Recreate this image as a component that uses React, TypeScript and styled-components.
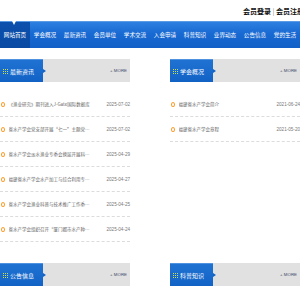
import React from 'react'
import styled, { createGlobalStyle } from 'styled-components'

const GlobalStyle = createGlobalStyle`
  html, body {
    margin: 0;
    padding: 0;
    background: #ffffff;
    overflow: hidden;
  }
  body {
    font-family: "Liberation Sans", "Noto Sans CJK SC", sans-serif;
  }
`

const Page = styled.div`
  width: 300px;
  height: 300px;
  overflow: hidden;
  background: #fff;
`

const TopBar = styled.div`
  height: 21px;
  display: flex;
  align-items: center;
  padding-left: 243px;
  white-space: nowrap;
  font-family: "Noto Sans CJK SC", sans-serif;
  font-size: 7px;
  font-weight: 700;
  color: #111;
`

const Divider = styled.span`
  margin: 0 1.5px;
  color: #888;
  font-weight: 400;
`

const Nav = styled.nav`
  height: 27px;
  display: flex;
  background: linear-gradient(#2d80e0, #1869d2 45%, #1260c8);
  border-top: 1px solid #5b9be6;
  box-sizing: border-box;
`

const NavItem = styled.a<{ $active?: boolean }>`
  position: relative;
  width: 30px;
  flex: none;
  display: flex;
  align-items: center;
  justify-content: center;
  font-family: "Noto Sans CJK SC", sans-serif;
  font-size: 5.6px;
  color: #fff;
  white-space: nowrap;
  background: ${(p) => (p.$active ? 'linear-gradient(#0c50ad, #0a4aa3)' : 'transparent')};

  &::before {
    content: '';
    display: ${(p) => (p.$active ? 'block' : 'none')};
    position: absolute;
    top: -1px;
    left: 12px;
    border-left: 2.5px solid transparent;
    border-right: 2.5px solid transparent;
    border-top: 4px solid #fff;
  }
`

const Content = styled.div`
  display: grid;
  grid-template-columns: 130px 130px;
  column-gap: 40px;
  row-gap: 21px;
  padding-top: 11px;
  align-items: start;
`

const Section = styled.section``

const SectionHead = styled.div`
  height: 23px;
  display: flex;
  align-items: center;
  background: #e1e1e1;
`

const Tab = styled.div`
  position: relative;
  width: 43px;
  height: 100%;
  flex: none;
  display: flex;
  align-items: center;
  gap: 2px;
  padding-left: 3px;
  box-sizing: border-box;
  background: linear-gradient(#1f72d2, #1262c6);
  border-top: 1px solid #4f93e0;
  font-family: "Noto Sans CJK SC", sans-serif;
  font-size: 6px;
  color: #fff;
  white-space: nowrap;

  &::after {
    content: '';
    position: absolute;
    right: -3px;
    top: 50%;
    margin-top: -2.5px;
    border-top: 2.5px solid transparent;
    border-bottom: 2.5px solid transparent;
    border-left: 3px solid #1262c6;
  }
`

const Dots = styled.span`
  display: grid;
  grid-template-columns: repeat(3, 1px);
  grid-auto-rows: 1px;
  gap: 1px;

  & > i {
    background: #c9e04a;
  }
`

const More = styled.a`
  margin-left: auto;
  padding-right: 3px;
  font-size: 4.4px;
  color: #3b4a6b;
  white-space: nowrap;
`

const List = styled.ul`
  list-style: none;
  margin: 10px 0 0;
  padding: 0;
`

const Row = styled.li`
  height: 25px;
  display: flex;
  align-items: center;
  border-bottom: 1px dashed #dcdcdc;
  box-sizing: border-box;
  font-family: "Noto Sans CJK SC", sans-serif;
  font-size: 4.5px;
  color: #666;
`

const Bullet = styled.span`
  width: 2px;
  height: 3px;
  flex: none;
  margin: 0 4px 0 0.5px;
  border: 0.8px solid #f59a23;
  border-radius: 50%;
`

const Title = styled.span`
  width: 85px;
  flex: none;
  overflow: hidden;
  white-space: nowrap;
  text-overflow: ellipsis;
`

const Date = styled.span`
  margin-left: auto;
  font-family: "Liberation Sans", sans-serif;
  font-size: 4.6px;
  color: #777;
  white-space: nowrap;
`

type Item = { title: string; date: string }

const news: Item[] = [
  { title: '《渔业研究》期刊进入J-Gate国际数据库', date: '2025-07-02' },
  { title: '省水产学会党支部开展“七一”主题党日活动', date: '2025-07-02' },
  { title: '省水产学会淡水渔业专委会换届开展科技服务活动', date: '2025-04-29' },
  { title: '福建省水产学会水产加工与综合利用专委会换届', date: '2025-04-27' },
  { title: '省水产学会渔业科普与技术推广工作委员会成立', date: '2025-04-25' },
  { title: '省水产学会组织召开“厦门都市水产种业园区建设”', date: '2025-04-24' },
]

const about: Item[] = [
  { title: '福建省水产学会简介', date: '2021-06-24' },
  { title: '福建省水产学会章程', date: '2021-05-20' },
]

const navItems = ['网站首页', '学会概况', '最新资讯', '会员单位', '学术交流', '入会申请', '科普知识', '业界动态', '公告信息', '党的生活']

const Block = ({ title, items }: { title: string; items: Item[] }) => (
  <Section>
    <SectionHead>
      <Tab>
        <Dots>
          {Array.from({ length: 9 }).map((_, i) => (
            <i key={i} />
          ))}
        </Dots>
        {title}
      </Tab>
      <More>+ MORE</More>
    </SectionHead>
    {items.length > 0 ? (
      <List>
        {items.map((item) => (
          <Row key={item.title}>
            <Bullet />
            <Title>{item.title}</Title>
            <Date>{item.date}</Date>
          </Row>
        ))}
      </List>
    ) : null}
  </Section>
)

const App = () => (
  <Page>
    <GlobalStyle />
    <TopBar>
      会员登录<Divider>|</Divider>会员注册
    </TopBar>
    <Nav>
      {navItems.map((label, i) => (
        <NavItem key={label} $active={i === 0}>
          {label}
        </NavItem>
      ))}
    </Nav>
    <Content>
      <Block title="最新资讯" items={news} />
      <Block title="学会概况" items={about} />
      <Block title="公告信息" items={[]} />
      <Block title="科普知识" items={[]} />
    </Content>
  </Page>
)

export default App
